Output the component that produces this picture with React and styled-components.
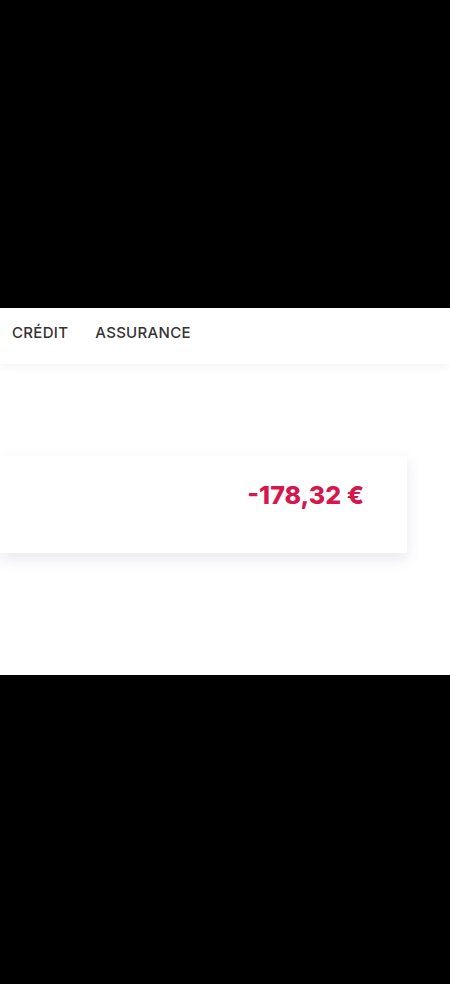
import React from 'react';
import styled, { createGlobalStyle } from 'styled-components';

const GlobalStyle = createGlobalStyle`
    html, body {
        margin: 0;
        padding: 0;
        background: #000;
    }
    body {
        font-family: 'Inter', 'Open Sans', sans-serif;
    }
`

const Screen = styled.div`
    width: 450px;
    height: 984px;
    display: flex;
    flex-direction: column;
    justify-content: flex-start;
    padding-top: 308px;
    box-sizing: border-box;
    background: #000;
`

const Panel = styled.div`
    height: 367px;
    background: #fff;
    display: flex;
    flex-direction: column;
    overflow: hidden;
`

const Nav = styled.nav`
    height: 56px;
    box-sizing: border-box;
    display: flex;
    align-items: center;
    gap: 27px;
    padding: 0 0 7px 12px;
    background: #fff;
    box-shadow: 0 4px 8px rgba(0, 0, 0, 0.04);
    position: relative;
    z-index: 1;
`

const NavItem = styled.span`
    font-family: 'Inter', sans-serif;
    font-size: 15px;
    font-weight: 500;
    letter-spacing: 0.3px;
    color: #333;
`

const Content = styled.div`
    padding-top: 92px;
`

const Card = styled.div`
    width: 407px;
    height: 97px;
    box-sizing: border-box;
    background: #fff;
    display: flex;
    justify-content: flex-end;
    align-items: flex-start;
    padding: 24px 43px 0 0;
    box-shadow: 0 6px 14px rgba(70, 70, 140, 0.13);
`

const Amount = styled.span`
    font-family: 'Inter', sans-serif;
    font-size: 25px;
    font-weight: 800;
    line-height: 30px;
    color: ${(props) => (props.negative ? '#d6174d' : '#2a9d55')};
`

export default function App() {
    return (
        <>
            <GlobalStyle />
            <Screen>
                <Panel>
                    <Nav>
                        <NavItem>CRÉDIT</NavItem>
                        <NavItem>ASSURANCE</NavItem>
                    </Nav>
                    <Content>
                        <Card>
                            <Amount negative>-178,32 €</Amount>
                        </Card>
                    </Content>
                </Panel>
            </Screen>
        </>
    );
}
